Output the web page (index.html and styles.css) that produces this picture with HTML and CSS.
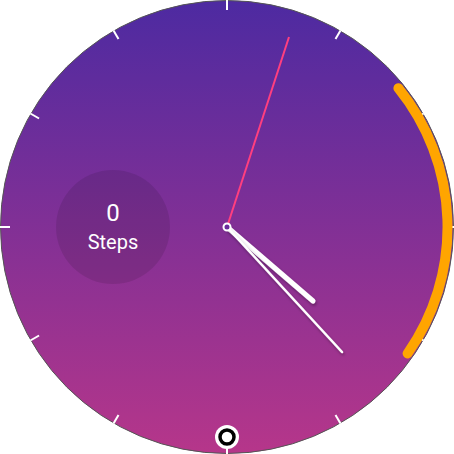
FILE: index.html
```html
<!DOCTYPE html>
<html>
<head>
<meta charset="utf-8">
<link rel="stylesheet" href="styles.css">
</head>
<body>
<div class="watch">
  <svg class="face" width="454" height="454" viewBox="0 0 454 454">
    <defs>
      <linearGradient id="bg" x1="0" y1="0" x2="0" y2="1">
        <stop offset="0" stop-color="#4d2aa1"/>
        <stop offset="1" stop-color="#b6368a"/>
      </linearGradient>
      <linearGradient id="hourg" gradientUnits="userSpaceOnUse" x1="229" y1="225" x2="225" y2="229">
        <stop offset="0" stop-color="#ffffff"/>
        <stop offset="1" stop-color="#d4d4d4"/>
      </linearGradient>
      <filter id="sh" x="-50%" y="-50%" width="200%" height="200%">
        <feDropShadow dx="1" dy="2" stdDeviation="1.5" flood-color="#000" flood-opacity="0.35"/>
      </filter>
      <clipPath id="dial">
        <circle cx="227" cy="227" r="226"/>
      </clipPath>
    </defs>
    <circle cx="227" cy="227" r="226.5" fill="url(#bg)" stroke="#555" stroke-width="1"/>
    <g class="ticks" stroke="#fff" stroke-width="2">
      <line x1="227" y1="0" x2="227" y2="10" transform="rotate(0 227 227)"/>
      <line x1="227" y1="0" x2="227" y2="10" transform="rotate(30 227 227)"/>
      <line x1="227" y1="0" x2="227" y2="10" transform="rotate(60 227 227)"/>
      <line x1="227" y1="0" x2="227" y2="10" transform="rotate(90 227 227)"/>
      <line x1="227" y1="0" x2="227" y2="10" transform="rotate(120 227 227)"/>
      <line x1="227" y1="0" x2="227" y2="10" transform="rotate(150 227 227)"/>
      <line x1="227" y1="0" x2="227" y2="10" transform="rotate(180 227 227)"/>
      <line x1="227" y1="0" x2="227" y2="10" transform="rotate(210 227 227)"/>
      <line x1="227" y1="0" x2="227" y2="10" transform="rotate(240 227 227)"/>
      <line x1="227" y1="0" x2="227" y2="10" transform="rotate(270 227 227)"/>
      <line x1="227" y1="0" x2="227" y2="10" transform="rotate(300 227 227)"/>
      <line x1="227" y1="0" x2="227" y2="10" transform="rotate(330 227 227)"/>
    </g>
    <!-- battery arc: r=220.5, from 51deg to 125deg -->
    <path clip-path="url(#dial)" d="M 398.4 88.2 A 220.5 220.5 0 0 1 407.6 353.5" fill="none" stroke="#ffa500" stroke-width="10" stroke-linecap="round"/>
    <!-- steps complication -->
    <circle cx="113" cy="227" r="57" fill="#000" fill-opacity="0.1"/>
    <text class="val" x="113" y="221" text-anchor="middle">0</text>
    <text class="lbl" x="113" y="249" text-anchor="middle">Steps</text>
    <!-- bottom icon -->
    <circle cx="227" cy="437" r="12" fill="#fff"/>
    <circle cx="227" cy="437" r="7" fill="none" stroke="#000" stroke-width="3.5"/>
    <!-- hands -->
    <g filter="url(#sh)">
      <line x1="227" y1="227" x2="313" y2="301" stroke="url(#hourg)" stroke-width="5" stroke-linecap="round"/>
      <line x1="227" y1="227" x2="342" y2="352" stroke="#fff" stroke-width="2.5" stroke-linecap="round"/>
    </g>
    <line x1="227" y1="227" x2="289" y2="37" stroke="#ff3f7f" stroke-width="2"/>
    <circle cx="227" cy="227" r="3.5" fill="#6a2c9c" stroke="#fff" stroke-width="2"/>
  </svg>
</div>
</body>
</html>
```
FILE: styles.css
```css
html, body {
  margin: 0;
  padding: 0;
  background: #fff;
}
.watch {
  width: 454px;
  height: 454px;
}
.face {
  display: block;
}
.val {
  font-family: Roboto, "Noto Sans", sans-serif;
  font-size: 24px;
  fill: #fff;
}
.lbl {
  font-family: Roboto, "Noto Sans", sans-serif;
  font-size: 20px;
  fill: #fff;
}
```
